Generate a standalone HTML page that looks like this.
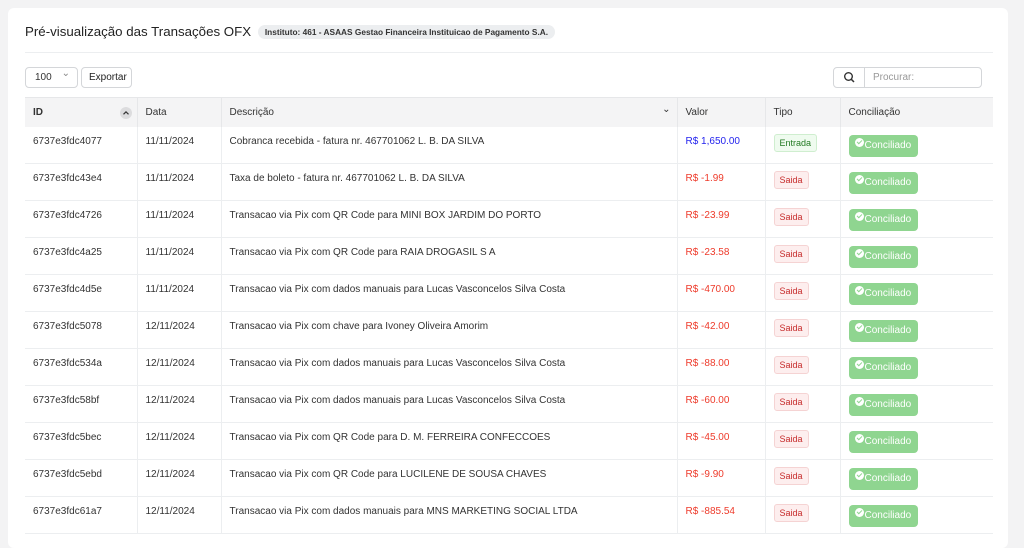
<!DOCTYPE html>
<html><head><meta charset="utf-8"><style>
*{box-sizing:border-box;margin:0;padding:0}
body{width:1024px;height:535px;overflow:hidden;background:#f3f3f4;font-family:"Liberation Sans",sans-serif;color:#333}
.card{position:absolute;left:8px;top:8px;width:1000px;height:540px;background:#fff;border-radius:6px}
h1{position:absolute;left:17px;top:16px;font-size:13.3px;font-weight:normal;color:#222;white-space:nowrap}
.pill{display:inline-block;vertical-align:1px;background:#eceef0;border-radius:8px;font-size:8.3px;font-weight:bold;padding:2px 7px;margin-left:3px;color:#333}
.hr{position:absolute;left:17px;top:44px;width:968px;height:1px;background:#eceef0}
.sel{position:absolute;left:17px;top:59px;width:53px;height:21px;border:1px solid #d4d6d9;border-radius:4px;font-size:10px;padding:4px 9px}
.sel:after{content:"⌄";position:absolute;right:7px;top:0px;color:#888;font-size:10px}
.btn{position:absolute;left:73px;top:59px;width:51px;height:21px;border:1px solid #d4d6d9;border-radius:4px;font-size:10px;padding:4px 7px;color:#222}
.search{position:absolute;left:825px;top:59px;width:149px;height:21px;border:1px solid #d4d6d9;border-radius:4px;font-size:10px;color:#999}
.search .ic{position:absolute;left:0;top:0;width:31px;height:19px;border-right:1px solid #d4d6d9}
.search span{position:absolute;left:39px;top:4px}
table{position:absolute;left:17px;top:89px;width:968px;border-collapse:collapse;font-size:10px}
th{background:#f4f4f5;height:29px;text-align:left;font-weight:normal;color:#333;padding:0 8px;border-right:1px solid #e6e7e9;border-top:1px solid #e6e7e9;position:relative}
th.b{font-weight:bold}
td{height:37px;vertical-align:top;padding:9px 8px 0;border-right:1px solid #eceef0;border-bottom:1px solid #eceef0;color:#333}
th:last-child,td:last-child{border-right:none}
.blue{color:#2323ee}.red{color:#ee3b2b}
.bg{display:inline-block;font-size:9px;padding:3px 5px;border-radius:3px;margin-top:-2px}
.in{background:#effbef;border:1px solid #cfeecf;color:#237a23}
.out{background:#fdeeee;border:1px solid #f5d3d3;color:#c62b2b}
.ok{display:inline-block;background:#8fd590;color:#fff;border-radius:4px;height:22px;width:69px;font-size:10px;padding:5px 0 0 16px;position:relative;margin-top:-1px}
.ok:before{content:"";position:absolute;left:6px;top:3px;width:9px;height:9px;border-radius:50%;background:#fff}
.ok:after{content:"";position:absolute;left:8px;top:5px;width:4px;height:2px;border-left:1.3px solid #8fd590;border-bottom:1.3px solid #8fd590;transform:rotate(-45deg)}
</style></head><body>
<div class="card">
<h1>Pré-visualização das Transações OFX <span class="pill">Instituto: 461 - ASAAS Gestao Financeira Instituicao de Pagamento S.A.</span></h1>
<div class="hr"></div>
<div class="sel">100</div>
<div class="btn">Exportar</div>
<div class="search"><div class="ic"><svg width="31" height="19"><circle cx="14.5" cy="8.5" r="3.8" fill="none" stroke="#333" stroke-width="1.4"/><line x1="17.3" y1="11.3" x2="20" y2="14" stroke="#333" stroke-width="1.5"/></svg></div><span>Procurar:</span></div>
<table>
<tr><th class="b" style="width:112px">ID<svg style="position:absolute;right:5px;top:9px" width="12" height="12"><circle cx="6" cy="6" r="6" fill="#dcdcde"/><path d="M3.5 7.3L6 4.8L8.5 7.3" fill="none" stroke="#333" stroke-width="1.2"/></svg></th><th style="width:84px">Data</th><th style="width:456px">Descrição<span style="position:absolute;right:6px;top:6px;font-size:10px">⌄</span></th><th style="width:88px">Valor</th><th style="width:75px">Tipo</th><th>Conciliação</th></tr>
<tr><td>6737e3fdc4077</td><td>11/11/2024</td><td>Cobranca recebida - fatura nr. 467701062 L. B. DA SILVA</td><td class="blue">R$ 1,650.00</td><td><span class="bg in">Entrada</span></td><td><span class="ok">Conciliado</span></td></tr>
<tr><td>6737e3fdc43e4</td><td>11/11/2024</td><td>Taxa de boleto - fatura nr. 467701062 L. B. DA SILVA</td><td class="red">R$ -1.99</td><td><span class="bg out">Saida</span></td><td><span class="ok">Conciliado</span></td></tr>
<tr><td>6737e3fdc4726</td><td>11/11/2024</td><td>Transacao via Pix com QR Code para MINI BOX JARDIM DO PORTO</td><td class="red">R$ -23.99</td><td><span class="bg out">Saida</span></td><td><span class="ok">Conciliado</span></td></tr>
<tr><td>6737e3fdc4a25</td><td>11/11/2024</td><td>Transacao via Pix com QR Code para RAIA DROGASIL S A</td><td class="red">R$ -23.58</td><td><span class="bg out">Saida</span></td><td><span class="ok">Conciliado</span></td></tr>
<tr><td>6737e3fdc4d5e</td><td>11/11/2024</td><td>Transacao via Pix com dados manuais para Lucas Vasconcelos Silva Costa</td><td class="red">R$ -470.00</td><td><span class="bg out">Saida</span></td><td><span class="ok">Conciliado</span></td></tr>
<tr><td>6737e3fdc5078</td><td>12/11/2024</td><td>Transacao via Pix com chave para Ivoney Oliveira Amorim</td><td class="red">R$ -42.00</td><td><span class="bg out">Saida</span></td><td><span class="ok">Conciliado</span></td></tr>
<tr><td>6737e3fdc534a</td><td>12/11/2024</td><td>Transacao via Pix com dados manuais para Lucas Vasconcelos Silva Costa</td><td class="red">R$ -88.00</td><td><span class="bg out">Saida</span></td><td><span class="ok">Conciliado</span></td></tr>
<tr><td>6737e3fdc58bf</td><td>12/11/2024</td><td>Transacao via Pix com dados manuais para Lucas Vasconcelos Silva Costa</td><td class="red">R$ -60.00</td><td><span class="bg out">Saida</span></td><td><span class="ok">Conciliado</span></td></tr>
<tr><td>6737e3fdc5bec</td><td>12/11/2024</td><td>Transacao via Pix com QR Code para D. M. FERREIRA CONFECCOES</td><td class="red">R$ -45.00</td><td><span class="bg out">Saida</span></td><td><span class="ok">Conciliado</span></td></tr>
<tr><td>6737e3fdc5ebd</td><td>12/11/2024</td><td>Transacao via Pix com QR Code para LUCILENE DE SOUSA CHAVES</td><td class="red">R$ -9.90</td><td><span class="bg out">Saida</span></td><td><span class="ok">Conciliado</span></td></tr>
<tr><td>6737e3fdc61a7</td><td>12/11/2024</td><td>Transacao via Pix com dados manuais para MNS MARKETING SOCIAL LTDA</td><td class="red">R$ -885.54</td><td><span class="bg out">Saida</span></td><td><span class="ok">Conciliado</span></td></tr>
</table>
</div>
</body></html>
